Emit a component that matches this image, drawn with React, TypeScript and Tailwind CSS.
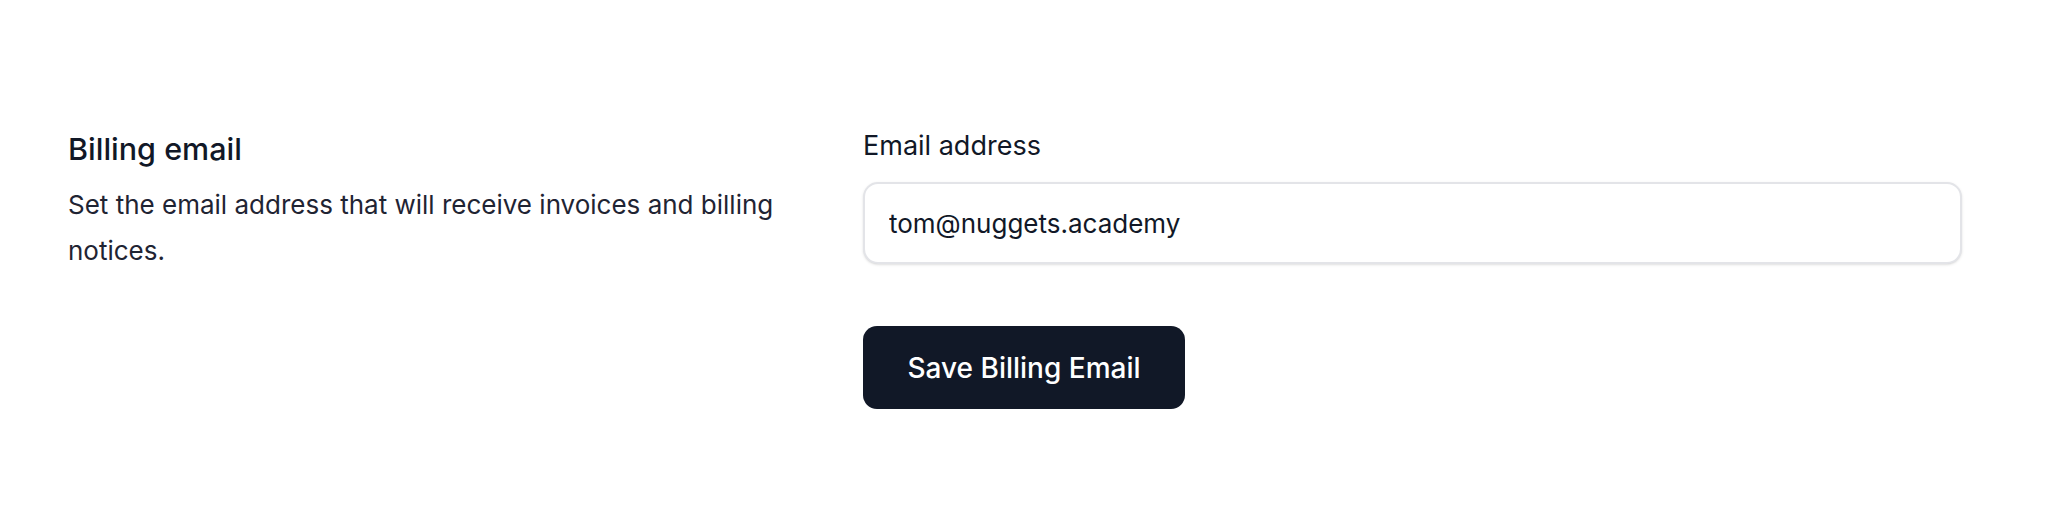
import { useState } from "react"

export default function App() {
  const [email, setEmail] = useState("tom@nuggets.academy")

  return (
    <div className="min-h-[529px] w-full bg-white font-['Inter',_'Noto_Sans',_sans-serif] text-[#111827] antialiased">
      <div className="flex gap-[65px] pl-[68px] pr-[86px] pt-[126px]">
        <div className="w-[730px] shrink-0 pt-[3px]">
          <h2 className="text-[30.5px] font-medium leading-[40px] text-[#111827]">Billing email</h2>
          <p className="mt-[13px] text-[26px] leading-[46px] text-[#1f2433]">
            Set the email address that will receive invoices and billing notices.
          </p>
        </div>
        <div className="flex-1">
          <label htmlFor="billing-email" className="block text-[27px] font-normal leading-[40px] text-[#111827]">
            Email address
          </label>
          <input
            id="billing-email"
            type="email"
            value={email}
            onChange={(e) => setEmail(e.target.value)}
            className="mt-[16px] block h-[82px] w-[1099px] rounded-[15px] border-2 border-[#e3e4e8] bg-white px-[24px] text-[26px] text-[#111827] shadow-sm outline-none"
          />
          <button className="mt-[62px] h-[83px] w-[322px] rounded-[14px] bg-[#111827] text-[28px] font-medium text-white">
            Save Billing Email
          </button>
        </div>
      </div>
    </div>
  )
}
